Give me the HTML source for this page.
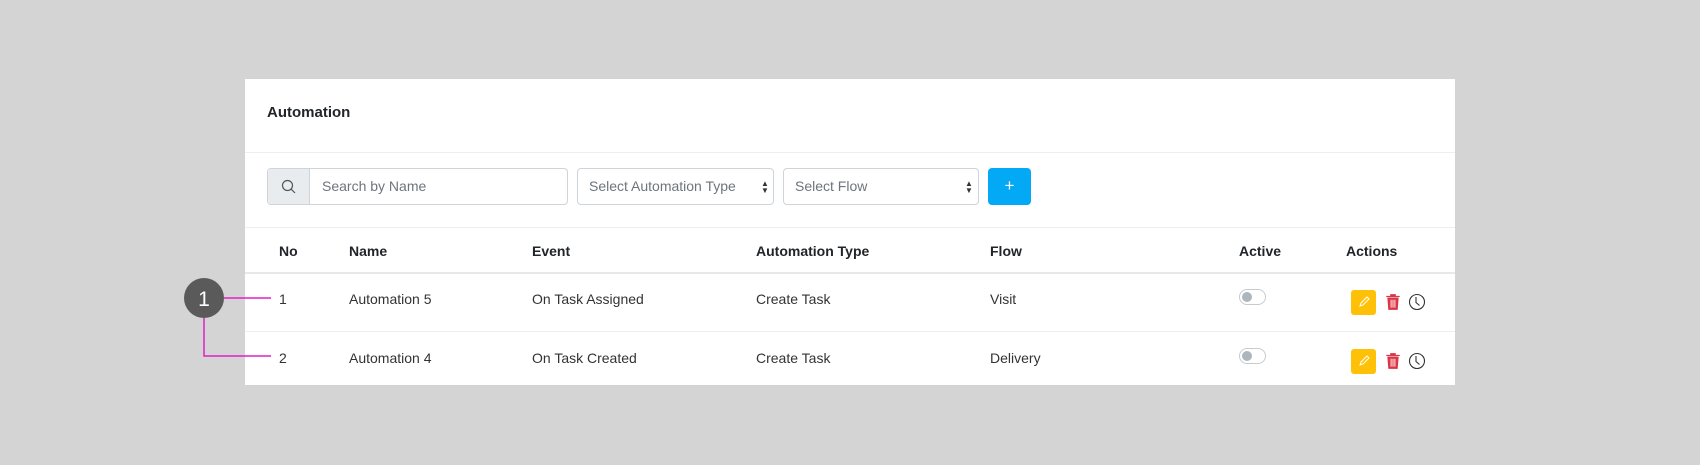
<!DOCTYPE html>
<html><head><style>
*{box-sizing:border-box;margin:0;padding:0}
body{width:1700px;height:465px;background:#d4d4d4;font-family:"Liberation Sans",sans-serif;color:#212529;position:relative;overflow:hidden}
.panel{position:absolute;left:245px;top:79px;width:1210px;height:306px;background:#fff}
.abs{position:absolute}
.title{left:22px;top:25px;font-size:15px;font-weight:bold}
.hr{left:0;width:1210px;height:1px;background:#eceef0}
.inp{border:1px solid #ced4da;border-radius:4px;height:37px;font-size:14px;color:#6c757d;line-height:35px}
.th{font-weight:bold;font-size:14px;top:164px}
.td{font-size:14px;color:#333}
.tog{width:27px;height:16px;border:1px solid #c6cbd0;border-radius:8px}
.tog:after{content:"";position:absolute;left:2px;top:2px;width:10px;height:10px;border-radius:50%;background:#adb5bd}
.edit{width:25px;height:25px;background:#ffc107;border-radius:3px}
</style></head><body>
<div class="panel">
<div class="abs title">Automation</div>
<div class="abs hr" style="top:73px"></div>
<div class="abs inp" style="left:22px;top:89px;width:301px"></div>
<div class="abs" style="left:23px;top:90px;width:42px;height:35px;background:#e9ecef;border-right:1px solid #ced4da;border-radius:4px 0 0 4px"></div>
<svg class="abs" style="left:36px;top:100px" width="16" height="16" viewBox="0 0 16 16"><circle cx="6.5" cy="6.5" r="5" fill="none" stroke="#555" stroke-width="1.2"/><path d="M10.2 10.2L14 14" stroke="#555" stroke-width="1.2"/></svg>
<div class="abs" style="left:77px;top:90px;font-size:14px;color:#6c757d;line-height:35px">Search by Name</div>
<div class="abs inp" style="left:332px;top:89px;width:197px;padding-left:11px">Select Automation Type</div>
<div class="abs" style="left:516px;top:101px;font-size:8px;line-height:7px;color:#333">▲<br>▼</div>
<div class="abs inp" style="left:538px;top:89px;width:196px;padding-left:11px">Select Flow</div>
<div class="abs" style="left:720px;top:101px;font-size:8px;line-height:7px;color:#333">▲<br>▼</div>
<div class="abs" style="left:743px;top:89px;width:43px;height:37px;background:#03a9f4;border-radius:4px;color:#fff;text-align:center;line-height:36px;font-size:17px">+</div>
<div class="abs hr" style="top:148px"></div>
<div class="abs th" style="left:34px">No</div>
<div class="abs th" style="left:104px">Name</div>
<div class="abs th" style="left:287px">Event</div>
<div class="abs th" style="left:511px">Automation Type</div>
<div class="abs th" style="left:745px">Flow</div>
<div class="abs th" style="left:994px">Active</div>
<div class="abs th" style="left:1101px">Actions</div>
<div class="abs hr" style="top:193px;height:2px;background:#e6e8ea"></div>
<div class="abs td" style="left:34px;top:212px">1</div>
<div class="abs td" style="left:104px;top:212px">Automation 5</div>
<div class="abs td" style="left:287px;top:212px">On Task Assigned</div>
<div class="abs td" style="left:511px;top:212px">Create Task</div>
<div class="abs td" style="left:745px;top:212px">Visit</div>
<div class="abs hr" style="top:252px"></div>
<div class="abs td" style="left:34px;top:271px">2</div>
<div class="abs td" style="left:104px;top:271px">Automation 4</div>
<div class="abs td" style="left:287px;top:271px">On Task Created</div>
<div class="abs td" style="left:511px;top:271px">Create Task</div>
<div class="abs td" style="left:745px;top:271px">Delivery</div>
<div class="abs tog" style="left:994px;top:210px"></div>
<div class="abs tog" style="left:994px;top:269px"></div>
<div class="abs edit" style="left:1106px;top:211px"><svg width="25" height="25" viewBox="0 0 25 25"><path d="M9 16l1-3 6-6 2 2-6 6z" fill="none" stroke="#fff" stroke-width="1"/></svg></div>
<div class="abs edit" style="left:1106px;top:270px"><svg width="25" height="25" viewBox="0 0 25 25"><path d="M9 16l1-3 6-6 2 2-6 6z" fill="none" stroke="#fff" stroke-width="1"/></svg></div>
<svg class="abs" style="left:1139px;top:214px" width="18" height="18" viewBox="0 0 16 16"><path d="M2 3h12M6 3V1.5h4V3M3.5 4.5h9l-.8 10h-7.4z" fill="#dc3545" stroke="#dc3545"/><path d="M6.3 6v7M8 6v7M9.7 6v7" stroke="#fff" stroke-width=".8"/></svg>
<svg class="abs" style="left:1139px;top:273px" width="18" height="18" viewBox="0 0 16 16"><path d="M2 3h12M6 3V1.5h4V3M3.5 4.5h9l-.8 10h-7.4z" fill="#dc3545" stroke="#dc3545"/><path d="M6.3 6v7M8 6v7M9.7 6v7" stroke="#fff" stroke-width=".8"/></svg>
<svg class="abs" style="left:1163px;top:214px" width="18" height="18" viewBox="0 0 18 18"><circle cx="9" cy="9" r="7.5" fill="none" stroke="#333" stroke-width="1.1"/><path d="M8 4v5.5l3.5 3" fill="none" stroke="#333" stroke-width="1.1"/></svg>
<svg class="abs" style="left:1163px;top:273px" width="18" height="18" viewBox="0 0 18 18"><circle cx="9" cy="9" r="7.5" fill="none" stroke="#333" stroke-width="1.1"/><path d="M8 4v5.5l3.5 3" fill="none" stroke="#333" stroke-width="1.1"/></svg>
</div>
<svg class="abs" style="left:0;top:0" width="1700" height="465">
<path d="M224 298H271M204 318V356H271" fill="none" stroke="#e020c8" stroke-width="1.5"/>
<circle cx="204" cy="298" r="20" fill="#5a5a5a"/>
<text x="204" y="306" text-anchor="middle" fill="#fff" font-family="Liberation Sans,sans-serif" font-size="21">1</text>
</svg>
</body></html>
